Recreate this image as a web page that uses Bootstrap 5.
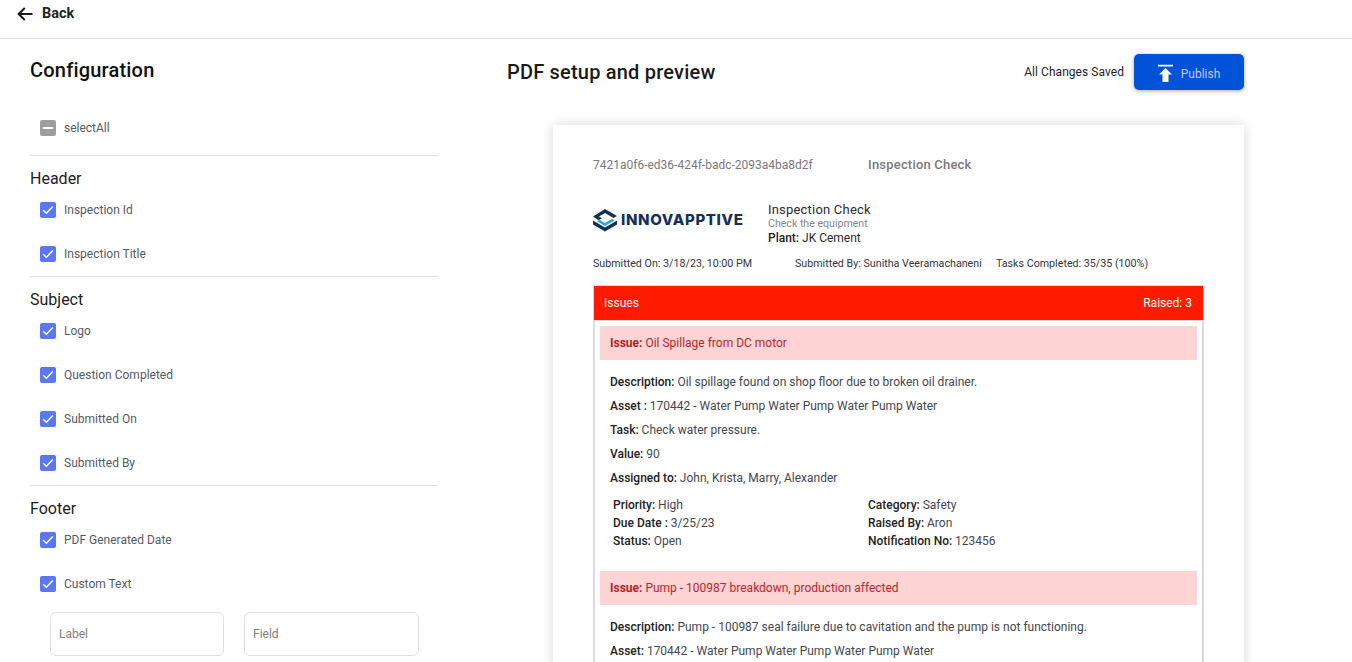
<!DOCTYPE html>
<html lang="en">
<head>
<meta charset="utf-8">
<title>PDF setup and preview</title>
<link href="https://cdn.jsdelivr.net/npm/bootstrap@5.3.0/dist/css/bootstrap.min.css" rel="stylesheet">
<style>
html,body{height:662px;overflow:hidden;background:#fff}
body{font-family:Roboto,"Liberation Sans",sans-serif;color:#212121;font-size:12px}
.topbar{height:39px;border-bottom:1px solid #e0e0e0;padding:0 0 10px 17px}
.back-txt{font-size:14.5px;font-weight:700;color:#1f1f1f;margin-left:9px}
.config{width:408px;margin-left:30px;flex:none}
.cfg-title{font-size:20px;font-weight:500;color:#111;line-height:24px;margin:19px 0 0;letter-spacing:.2px}
.sec-title{font-size:16px;font-weight:400;line-height:19px;color:#1c1c1c;margin:13px 0 0}
.chk-row{height:44px;padding-left:10px;color:#555b66}
.chk-box{width:16px;height:16px;border-radius:2px;background:#5a77f6;margin-right:8px;flex:none}
.chk-box.mixed{background:#9e9e9e}
.cfg-rule{border-top:1px solid #e0e0e0;margin:0;opacity:1}
.cfg-rule.first-rule{margin-top:5px}
.select-row{margin-top:24px}
.field-row{gap:20px;padding-left:20px;margin-top:6px}
.cfg-input{width:174px;height:44px;border:1px solid #e0e0e0;border-radius:6px;padding:0 8px;font-size:12px;color:#777}
.cfg-input.wide-field{width:175px}
.cfg-input::placeholder{color:#808080}
.preview{margin-left:69px;width:737px;flex:none}
.pv-title{font-size:20px;font-weight:500;color:#1a1a1a;letter-spacing:.2px;margin:0}
.pv-head{height:86px;padding-top:15px}
.pv-line{height:36px}
.saved{font-size:12px;color:#1f1f1f;margin-right:10px;letter-spacing:.05px}
.pub-btn{width:110px;height:36px;background:#0052d9;color:#bcd0f5;border:0;border-radius:5px;box-shadow:0 1px 4px rgba(0,0,0,.35);font-size:12px;padding:3px 0 0}
.pub-icon{margin-right:8px;margin-bottom:2px}
.paper{width:691px;margin-left:46px;height:600px;box-shadow:0 0 12px rgba(0,0,0,.16);padding:31px 40px 0}
.pdf-id{font-size:12px;color:#7a7a7a;width:275px}
.pdf-name{font-size:13px;font-weight:500;color:#7a7a7a;letter-spacing:.2px}
.id-row{height:18px}
.logo-row{margin-top:29px}
.brand{width:175px;flex:none;margin-bottom:8px}
.brand-name{font-family:Inter,"Liberation Sans",sans-serif;font-weight:800;font-size:15px;color:#14305c;letter-spacing:.65px;margin-left:4px;white-space:nowrap}
.rep-name{font-size:13px;font-weight:400;line-height:14px;letter-spacing:.2px;color:#2b2b2b}
.rep-sub{font-size:10.6px;line-height:14px;color:#85888f}
.rep-plant{font-size:12px;line-height:14px;color:#2b2b2b}
.rep-plant b,.kv b{font-weight:500;color:#222}
.meta{font-size:10.7px;color:#33373e;line-height:13px;margin-top:12px}
.meta-a{width:202px}
.meta-b{width:201px}
.issue-box{margin-top:15px;border:1px solid #dcdcdc;border-bottom:0;width:611px}
.issue-head{height:34px;background:#ff1a00;color:#fff;padding:0 11px 0 10px;font-size:12px}
.issue-body{padding:5px 5px 0;border:1px solid #dcdcdc;border-width:1px 1px 0}
.issue-band{height:34px;background:#ffd4d4;color:#b9262c;padding:0 10px;font-size:12px}
.issue-band b{font-weight:700;color:#b31f26}
.kv{font-size:12px;line-height:24px;padding-left:10px;color:#45484f}
.kv-top{margin-top:10px}
.kv-grid{padding:6px 0 0 13px;margin-bottom:21px}
.kv-grid .kv{line-height:18px;padding-left:0}
.kv-col{width:255px;flex:none}
</style>
</head>
<body>
<header class="topbar d-flex align-items-center">
  <svg width="16" height="14" viewBox="0 0 16 14" aria-hidden="true"><path d="M15.500 7H1.800M7.800 1 1.600 7l6.200 6" fill="none" stroke="#1a1a1a" stroke-width="2"/></svg>
  <span class="back-txt">Back</span>
</header>
<main class="d-flex">
  <aside class="config">
    <h2 class="cfg-title">Configuration</h2>
    <div class="chk-row select-row d-flex align-items-center"><span class="chk-box mixed d-flex align-items-center justify-content-center"><svg width="10" height="2"><rect width="10" height="2" fill="#fff"/></svg></span>selectAll</div>
    <hr class="cfg-rule first-rule">
    <h3 class="sec-title">Header</h3>
    <div class="chk-row d-flex align-items-center"><span class="chk-box d-flex align-items-center justify-content-center"><svg width="12" height="10" viewBox="0 0 12 10"><path d="M1.200 5.200 4.400 8.300 10.800 1.500" fill="none" stroke="#fff" stroke-width="1.400"/></svg></span>Inspection Id</div>
    <div class="chk-row d-flex align-items-center"><span class="chk-box d-flex align-items-center justify-content-center"><svg width="12" height="10" viewBox="0 0 12 10"><path d="M1.200 5.200 4.400 8.300 10.800 1.500" fill="none" stroke="#fff" stroke-width="1.400"/></svg></span>Inspection Title</div>
    <hr class="cfg-rule">
    <h3 class="sec-title">Subject</h3>
    <div class="chk-row d-flex align-items-center"><span class="chk-box d-flex align-items-center justify-content-center"><svg width="12" height="10" viewBox="0 0 12 10"><path d="M1.200 5.200 4.400 8.300 10.800 1.500" fill="none" stroke="#fff" stroke-width="1.400"/></svg></span>Logo</div>
    <div class="chk-row d-flex align-items-center"><span class="chk-box d-flex align-items-center justify-content-center"><svg width="12" height="10" viewBox="0 0 12 10"><path d="M1.200 5.200 4.400 8.300 10.800 1.500" fill="none" stroke="#fff" stroke-width="1.400"/></svg></span>Question Completed</div>
    <div class="chk-row d-flex align-items-center"><span class="chk-box d-flex align-items-center justify-content-center"><svg width="12" height="10" viewBox="0 0 12 10"><path d="M1.200 5.200 4.400 8.300 10.800 1.500" fill="none" stroke="#fff" stroke-width="1.400"/></svg></span>Submitted On</div>
    <div class="chk-row d-flex align-items-center"><span class="chk-box d-flex align-items-center justify-content-center"><svg width="12" height="10" viewBox="0 0 12 10"><path d="M1.200 5.200 4.400 8.300 10.800 1.500" fill="none" stroke="#fff" stroke-width="1.400"/></svg></span>Submitted By</div>
    <hr class="cfg-rule">
    <h3 class="sec-title">Footer</h3>
    <div class="chk-row d-flex align-items-center"><span class="chk-box d-flex align-items-center justify-content-center"><svg width="12" height="10" viewBox="0 0 12 10"><path d="M1.200 5.200 4.400 8.300 10.800 1.500" fill="none" stroke="#fff" stroke-width="1.400"/></svg></span>PDF Generated Date</div>
    <div class="chk-row d-flex align-items-center"><span class="chk-box d-flex align-items-center justify-content-center"><svg width="12" height="10" viewBox="0 0 12 10"><path d="M1.200 5.200 4.400 8.300 10.800 1.500" fill="none" stroke="#fff" stroke-width="1.400"/></svg></span>Custom Text</div>
    <div class="field-row d-flex">
      <input class="cfg-input" placeholder="Label" aria-label="Label">
      <input class="cfg-input wide-field" placeholder="Field" aria-label="Field">
    </div>
  </aside>
  <section class="preview">
    <div class="pv-head d-flex justify-content-between align-items-start">
      <div class="pv-line d-flex align-items-center"><h1 class="pv-title">PDF setup and preview</h1></div>
      <div class="d-flex align-items-center">
        <span class="saved">All Changes Saved</span>
        <button class="pub-btn d-flex align-items-center justify-content-center" type="button">
          <svg class="pub-icon" width="15" height="18" viewBox="0 0 15 18"><path d="M0 .8h15v1.600H0zM7.500 4 14 10.500H10.500V18h-6v-7.500H1z" fill="#fff"/></svg>Publish
        </button>
      </div>
    </div>
    <div class="paper">
      <div class="id-row d-flex align-items-center"><span class="pdf-id">7421a0f6-ed36-424f-badc-2093a4ba8d2f</span><span class="pdf-name">Inspection Check</span></div>
      <div class="logo-row d-flex align-items-center">
        <div class="brand d-flex align-items-center">
          <svg width="24" height="23" viewBox="0 0 24 23"><path d="M12 0 24 7 20.500 9 12 4 6 7.500 9 9.300 5.500 11.300 0 7.500Z" fill="#14305c"/><path d="M6.500 10.800 12 14 19 10 21.500 11.400 12 17 4 12.300Z" fill="#2aa8e0"/><path d="M0 11.500 12 18.500 24 11.500V15.500L12 22.500 0 15.500Z" fill="#14305c"/></svg>
          <span class="brand-name">INNOVAPPTIVE</span>
        </div>
        <div>
          <div class="rep-name">Inspection Check</div>
          <div class="rep-sub">Check the equipment</div>
          <div class="rep-plant"><b>Plant:</b> JK Cement</div>
        </div>
      </div>
      <div class="meta d-flex"><span class="meta-a">Submitted On: 3/18/23, 10:00 PM</span><span class="meta-b">Submitted By: Sunitha Veeramachaneni</span><span>Tasks Completed: 35/35 (100%)</span></div>
      <div class="issue-box">
        <div class="issue-head d-flex align-items-center justify-content-between"><span>Issues</span><span>Raised: 3</span></div>
        <div class="issue-body">
          <div class="issue-band d-flex align-items-center"><span><b>Issue:</b> Oil Spillage from DC motor</span></div>
          <div class="kv kv-top"><b>Description:</b> Oil spillage found on shop floor due to broken oil drainer.</div>
          <div class="kv"><b>Asset :</b> 170442 - Water Pump Water Pump Water Pump Water</div>
          <div class="kv"><b>Task:</b> Check water pressure.</div>
          <div class="kv"><b>Value:</b> 90</div>
          <div class="kv"><b>Assigned to:</b> John, Krista, Marry, Alexander</div>
          <div class="kv-grid d-flex">
            <div class="kv-col">
              <div class="kv"><b>Priority:</b> High</div>
              <div class="kv"><b>Due Date :</b> 3/25/23</div>
              <div class="kv"><b>Status:</b> Open</div>
            </div>
            <div>
              <div class="kv"><b>Category:</b> Safety</div>
              <div class="kv"><b>Raised By:</b> Aron</div>
              <div class="kv"><b>Notification No:</b> 123456</div>
            </div>
          </div>
          <div class="issue-band d-flex align-items-center"><span><b>Issue:</b> Pump - 100987 breakdown, production affected</span></div>
          <div class="kv kv-top"><b>Description:</b> Pump - 100987 seal failure due to cavitation and the pump is not functioning.</div>
          <div class="kv"><b>Asset:</b> 170442 - Water Pump Water Pump Water Pump Water</div>
        </div>
      </div>
    </div>
  </section>
</main>
<script src="https://cdn.jsdelivr.net/npm/bootstrap@5.3.0/dist/js/bootstrap.bundle.min.js"></script>
</body>
</html>
